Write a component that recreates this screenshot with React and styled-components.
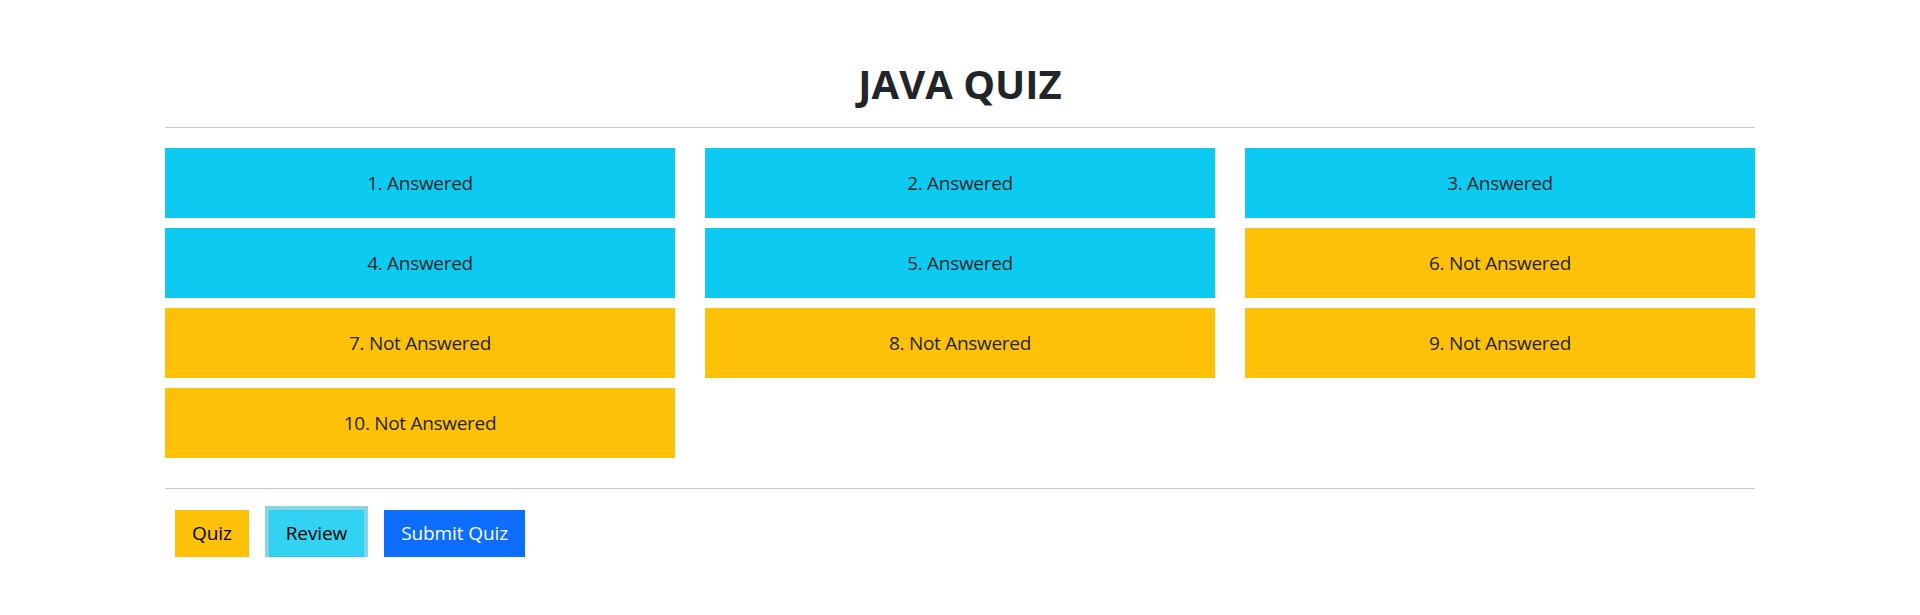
import React from "react";
import styled, { createGlobalStyle } from "styled-components";

const GlobalStyle = createGlobalStyle`
  html, body {
    margin: 0;
    padding: 0;
    background: #ffffff;
  }
  body {
    font-family: "Open Sans", "Noto Sans", "Liberation Sans", sans-serif;
    color: #212529;
  }
  * { box-sizing: border-box; }
`;

const Page = styled.div`
  width: 1590px;
  margin: 0 auto;
  padding-top: 60px;
`;

const Title = styled.h1`
  margin: 0;
  height: 48px;
  line-height: 48px;
  font-size: 40px;
  font-weight: 700;
  text-align: center;
  color: #212529;
`;

const Rule = styled.hr`
  margin: ${(p) => p.$top}px 0 ${(p) => p.$bottom}px;
  border: 0;
  border-top: 1px solid #c8c9ca;
  height: 0;
`;

const Grid = styled.div`
  display: grid;
  grid-template-columns: repeat(3, 1fr);
  column-gap: 30px;
  row-gap: 10px;
`;

const Tile = styled.button`
  height: 70px;
  border: 0;
  border-radius: 0;
  background: ${(p) => (p.$answered ? "#0dcaf0" : "#ffc107")};
  color: #212529;
  font-family: inherit;
  font-size: 19px;
  letter-spacing: -0.3px;
  display: flex;
  align-items: center;
  justify-content: center;
  cursor: pointer;
  padding: 0;
`;

const Toolbar = styled.div`
  display: flex;
  gap: 20px;
  padding-left: 10px;
`;

const Btn = styled.button`
  height: 47px;
  padding: 0 16px;
  border: 1px solid ${(p) => p.$border};
  border-radius: 0;
  background: ${(p) => p.$bg};
  color: ${(p) => p.$fg};
  font-family: inherit;
  font-size: 19px;
  letter-spacing: -0.1px;
  line-height: 1;
  cursor: pointer;
  box-shadow: ${(p) => (p.$focus ? "0 0 0 4px rgba(11, 172, 204, 0.5)" : "none")};
`;

const questions = [true, true, true, true, true, false, false, false, false, false];

export default function App() {
  return (
    <>
      <GlobalStyle />
      <Page>
        <Title>JAVA QUIZ</Title>
        <Rule $top={19} $bottom={20} />
        <Grid>
          {questions.map((a, i) => (
            <Tile key={i} $answered={a}>
              {i + 1}. {a ? "Answered" : "Not Answered"}
            </Tile>
          ))}
        </Grid>
        <Rule $top={30} $bottom={21} />
        <Toolbar>
          <Btn $bg="#ffc107" $border="#ffc107" $fg="#000">Quiz</Btn>
          <Btn $bg="#31d2f2" $border="#25cff2" $fg="#000" $focus>Review</Btn>
          <Btn $bg="#0d6efd" $border="#0d6efd" $fg="#fff">Submit Quiz</Btn>
        </Toolbar>
      </Page>
    </>
  );
}
